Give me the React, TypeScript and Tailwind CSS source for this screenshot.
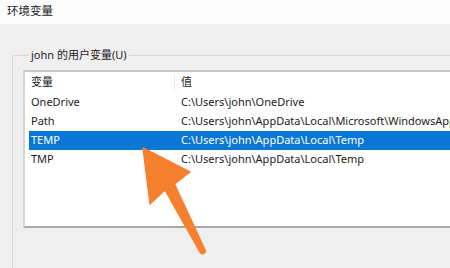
const rows = [
  { name: 'OneDrive', value: 'C:\\Users\\john\\OneDrive' },
  { name: 'Path', value: 'C:\\Users\\john\\AppData\\Local\\Microsoft\\WindowsApps;' },
  { name: 'TEMP', value: 'C:\\Users\\john\\AppData\\Local\\Temp', selected: true },
  { name: 'TMP', value: 'C:\\Users\\john\\AppData\\Local\\Temp' },
];

const font = { fontFamily: '"Noto Sans", "Noto Sans CJK SC", sans-serif' };

export default function App() {
  return (
    <div className="relative w-[450px] h-[268px] overflow-hidden bg-[#f0eff0] text-[11px] text-[#1b1b1b]" style={font}>
      <div className="h-[24px] bg-[#fdfcfd] pl-[7px] pt-[3px] leading-[16px] text-[11.5px]">环境变量</div>

      <fieldset className="ml-[12px] mt-[23px] border-l border-t border-[#d9d8d9] pl-[10px] pt-[7px] h-[260px]">
        <legend className="ml-[6px] px-[2px] leading-[16px]">john 的用户变量(U)</legend>

        <div className="w-[600px] h-[158px] bg-white border-t-2 border-l-2 border-b-2 border-t-[#c9c8c9] border-l-[#d6d5d6] border-b-[#a9a8a9] pl-[4px] whitespace-nowrap">
          <div className="flex h-[21px] items-center">
            <div className="w-[145px] pl-[2px]">变量</div>
            <div className="w-px h-[17px] bg-[#ececec]" />
            <div className="pl-[6px]">值</div>
          </div>
          {rows.map((r) => (
            <div
              key={r.name}
              className={`flex h-[19px] items-center ${r.selected ? 'bg-[#0a77d5] text-white' : ''}`}
            >
              <div className="w-[150px] pl-[2px]">{r.name}</div>
              <div className="pl-[2px]">{r.value}</div>
            </div>
          ))}
        </div>
      </fieldset>

      <svg className="absolute left-0 top-0" width="450" height="268" viewBox="0 0 450 268">
        <path
          d="M143 148 L190 172 L174.5 184 L205.5 251 Q204 255 200.5 253 L165 190 L150 204 Z"
          fill="#f5802f"
          stroke="#f5802f"
          strokeWidth="1.5"
          strokeLinejoin="round"
        />
      </svg>
    </div>
  );
}
